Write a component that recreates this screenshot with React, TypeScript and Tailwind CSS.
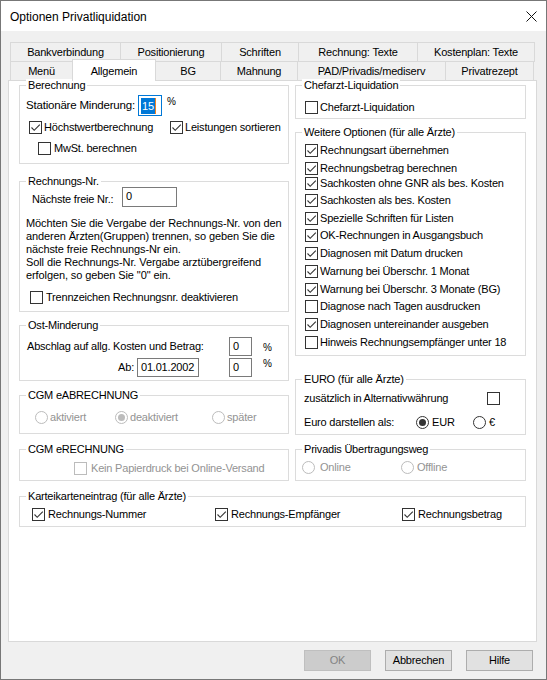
import React from "react";

type CheckProps = {
  label?: string;
  checked?: boolean;
  disabled?: boolean;
  className?: string;
  textClass?: string;
};

function Check({ label, checked = false, disabled = false, className = "", textClass = "ml-[2px]" }: CheckProps) {
  return (
    <div className={`flex items-center h-[13px] ${className}`}>
      <span
        className={`w-[13px] h-[13px] shrink-0 border bg-white flex items-center justify-center ${
          disabled ? "border-[#bcbcbc]" : "border-[#333333]"
        }`}
      >
        {checked && (
          <svg width="11" height="11" viewBox="0 0 11 11">
            <path d="M1.5 5.5 L4.2 8.3 L9.8 2.6" fill="none" stroke="#333333" strokeWidth="1.1" />
          </svg>
        )}
      </span>
      {label && (
        <span className={`whitespace-nowrap leading-[13px] ${textClass} ${disabled ? "text-[#939393]" : ""}`}>{label}</span>
      )}
    </div>
  );
}

function Radio({ label, checked = false, disabled = false, className = "", textClass = "ml-[2px]" }: CheckProps) {
  return (
    <div className={`flex items-center h-[13px] ${className}`}>
      <span
        className={`w-[13px] h-[13px] shrink-0 rounded-full border bg-white flex items-center justify-center ${
          disabled ? "border-[#bcbcbc]" : "border-[#333333]"
        }`}
      >
        {checked && (
          <span className={`w-[7px] h-[7px] rounded-full ${disabled ? "bg-[#bcbcbc]" : "bg-[#333333]"}`} />
        )}
      </span>
      {label && (
        <span className={`whitespace-nowrap leading-[13px] ${textClass} ${disabled ? "text-[#939393]" : ""}`}>{label}</span>
      )}
    </div>
  );
}

function Group({ title, className, children }: { title: string; className: string; children?: React.ReactNode }) {
  return (
    <div className={`relative shrink-0 border border-[#dcdcdc] ${className}`}>
      <span className="absolute left-[6px] -top-[7px] bg-white px-[2px] leading-[13px] whitespace-nowrap">{title}</span>
      {children}
    </div>
  );
}

function Field({ value, className }: { value: string; className: string }) {
  return (
    <div className={`shrink-0 border border-[#7a7a7a] bg-white flex items-center pl-[3px] leading-[13px] ${className}`}>
      {value}
    </div>
  );
}

const row1 = [
  { label: "Bankverbindung", w: "w-[111px]" },
  { label: "Positionierung", w: "w-[101px]" },
  { label: "Schriften", w: "w-[77px]" },
  { label: "Rechnung: Texte", w: "w-[119px]" },
  { label: "Kostenplan: Texte", w: "w-[117px]" },
];

const row2 = [
  { label: "Menü", w: "w-[63px]" },
  { label: "Allgemein", w: "w-[84px]", active: true },
  { label: "BG", w: "w-[65px]" },
  { label: "Mahnung", w: "w-[77px]" },
  { label: "PAD/Privadis/mediserv", w: "w-[148px]" },
  { label: "Privatrezept", w: "w-[88px]" },
];

const options = [
  { label: "Rechnungsart übernehmen", checked: true, mt: "mt-[11px]" },
  { label: "Rechnungsbetrag berechnen", checked: true, mt: "mt-[5px]" },
  { label: "Sachkosten ohne GNR als bes. Kosten", checked: true, mt: "mt-[2px]" },
  { label: "Sachkosten als bes. Kosten", checked: true, mt: "mt-[4px]" },
  { label: "Spezielle Schriften für Listen", checked: true, mt: "mt-[5px]" },
  { label: "OK-Rechnungen in Ausgangsbuch", checked: true, mt: "mt-[4px]" },
  { label: "Diagnosen mit Datum drucken", checked: true, mt: "mt-[5px]" },
  { label: "Warnung bei Überschr. 1 Monat", checked: true, mt: "mt-[5px]" },
  { label: "Warnung bei Überschr. 3 Monate (BG)", checked: true, mt: "mt-[5px]" },
  { label: "Diagnose nach Tagen ausdrucken", checked: false, mt: "mt-[4px]" },
  { label: "Diagnosen untereinander ausgeben", checked: true, mt: "mt-[5px]" },
  { label: "Hinweis Rechnungsempfänger unter 18", checked: false, mt: "mt-[5px]" },
];

export default function App() {
  return (
    <div className="w-[547px] h-[680px] border border-[#777777] bg-[#f0f0f0] text-[11px] tracking-[-0.2px] text-black font-['Liberation_Sans',Arial,sans-serif] overflow-hidden">
      {/* title bar */}
      <div className="h-[30px] bg-white flex items-center justify-between pl-[9px] pr-[9px]">
        <span className="text-[12px] leading-[14px] tracking-normal mt-[2px]">Optionen Privatliquidation</span>
        <svg width="11" height="11" viewBox="0 0 11 11" className="mt-[1px]">
          <path d="M0.5 0.5 L10.5 10.5 M10.5 0.5 L0.5 10.5" stroke="#111111" strokeWidth="1" />
        </svg>
      </div>

      <div className="pl-[7px]">
        {/* tabs */}
        <div className="mt-[11px] ml-[2px]">
          <div className="flex h-[19px]">
            {row1.map((t, i) => (
              <div
                key={t.label}
                className={`${t.w} h-full flex items-center justify-center border-t border-r border-[#d9d9d9] bg-[#f0f0f0] whitespace-nowrap ${
                  i === 0 ? "border-l" : ""
                }`}
              >
                {t.label}
              </div>
            ))}
          </div>
          <div className="flex h-[19px] border-t border-[#d9d9d9] w-[525px]">
            {row2.map((t, i) =>
              t.active ? (
                <div
                  key={t.label}
                  className={`${t.w} relative z-10 self-start h-[22px] -mt-[3px] flex items-start justify-center pt-[3px] bg-white border-t border-r border-l border-[#d9d9d9] -ml-px whitespace-nowrap`}
                >
                  {t.label}
                </div>
              ) : (
                <div
                  key={t.label}
                  className={`${t.w} h-full flex items-center justify-center pt-[1px] border-r border-[#d9d9d9] bg-[#f0f0f0] whitespace-nowrap ${
                    i === 0 ? "border-l" : ""
                  }`}
                >
                  {t.label}
                </div>
              )
            )}
          </div>
        </div>

        {/* tab page */}
        <div className="w-[529px] h-[562px] border border-[#d9d9d9] bg-white pt-[4px] pl-[10px]">
          <div className="flex gap-[6px]">
            {/* left column */}
            <div className="flex flex-col">
              <Group title="Berechnung" className="w-[270px] h-[79px]">
                <div className="flex items-center mt-[9px] pl-[6px] h-[21px]">
                  <span className="w-[112px] whitespace-nowrap text-[11.5px] mt-[1px]">Stationäre Minderung:</span>
                  <div className="w-[24px] h-[21px] border border-[#0078d7] bg-white flex items-center pl-[2px]">
                    <span className="bg-[#0078d7] text-white leading-[16px] h-[16px] px-[1px]">15</span>
                    <span className="w-[1px] h-[16px] bg-[#f58220]" />
                  </div>
                  <span className="self-start text-[10px] leading-[10px] ml-[5px] mt-[2px]">%</span>
                </div>
                <div className="flex mt-[5px] pl-[9px]">
                  <Check label="Höchstwertberechnung" checked className="w-[141px]" />
                  <Check label="Leistungen sortieren" checked />
                </div>
                <Check label="MwSt. berechnen" className="mt-[8px] ml-[18px]" textClass="ml-[3px]" />
              </Group>

              <Group title="Rechnungs-Nr." className="w-[270px] h-[131px] mt-[17px]">
                <div className="flex items-center mt-[5px] pl-[12px]">
                  <span className="w-[90px] whitespace-nowrap mt-[4px]">Nächste freie Nr.:</span>
                  <Field value="0" className="w-[55px] h-[20px] items-start pt-[2px]" />
                </div>
                <p className="mt-[9px] pl-[6px] leading-[13px] whitespace-nowrap tracking-[-0.1px]">
                  Möchten Sie die Vergabe der Rechnungs-Nr. von den
                  <br />
                  anderen Ärzten(Gruppen) trennen, so geben Sie die
                  <br />
                  nächste freie Rechnungs-Nr ein.
                  <br />
                  Soll die Rechnungs-Nr. Vergabe arztübergreifend
                  <br />
                  erfolgen, so geben Sie "0" ein.
                </p>
                <Check label="Trennzeichen Rechnungsnr. deaktivieren" className="mt-[9px] ml-[10px]" textClass="ml-[3px]" />
              </Group>

              <Group title="Ost-Minderung" className="w-[270px] h-[56px] mt-[13px]">
                <div className="flex items-center mt-[11px] pl-[7px] h-[19px]">
                  <span className="w-[202px] whitespace-nowrap">Abschlag auf allg. Kosten und Betrag:</span>
                  <Field value="0" className="w-[23px] h-[19px]" />
                  <span className="text-[10px] leading-[10px] ml-[11px] mt-[3px]">%</span>
                </div>
                <div className="flex items-center mt-[2px] pl-[7px] h-[19px]">
                  <span className="w-[110px] text-right pr-[3px] whitespace-nowrap">Ab:</span>
                  <Field value="01.01.2002" className="w-[62px] h-[19px]" />
                  <Field value="0" className="w-[23px] h-[19px] ml-[30px]" />
                  <span className="self-start text-[10px] leading-[10px] ml-[11px] mt-[1px]">%</span>
                </div>
              </Group>

              <Group title="CGM eABRECHNUNG" className="w-[270px] h-[39px] mt-[14px]">
                <div className="flex mt-[15px] pl-[15px]">
                  <Radio label="aktiviert" disabled className="w-[80px]" />
                  <Radio label="deaktiviert" disabled checked className="w-[97px]" />
                  <Radio label="später" disabled />
                </div>
              </Group>

              <Group title="CGM eRECHNUNG" className="w-[270px] h-[32px] mt-[15px]">
                <Check label="Kein Papierdruck bei Online-Versand" disabled className="mt-[12px] ml-[54px]" textClass="ml-[4px]" />
              </Group>
            </div>

            {/* right column */}
            <div className="flex flex-col">
              <Group title="Chefarzt-Liquidation" className="w-[231px] h-[34px]">
                <Check label="Chefarzt-Liquidation" className="mt-[15px] ml-[9px]" />
              </Group>

              <Group title="Weitere Optionen (für alle Ärzte)" className="w-[231px] h-[224px] mt-[13px]">
                {options.map((o) => (
                  <Check key={o.label} label={o.label} checked={o.checked} className={`${o.mt} ml-[9px]`} />
                ))}
              </Group>

              <Group title="EURO (für alle Ärzte)" className="w-[231px] h-[56px] mt-[23px]">
                <div className="flex items-center mt-[12px] pl-[8px]">
                  <span className="w-[183px] whitespace-nowrap leading-[13px]">zusätzlich in Alternativwährung</span>
                  <Check />
                </div>
                <div className="flex items-center mt-[11px] pl-[8px]">
                  <span className="w-[112px] whitespace-nowrap leading-[13px]">Euro darstellen als:</span>
                  <Radio label="EUR" checked className="w-[57px]" textClass="ml-[3px]" />
                  <Radio label="€" textClass="ml-[3px]" />
                </div>
              </Group>

              <Group title="Privadis Übertragungsweg" className="w-[231px] h-[32px] mt-[14px]">
                <div className="flex mt-[11px] pl-[6px]">
                  <Radio label="Online" disabled className="w-[99px]" textClass="ml-[5px]" />
                  <Radio label="Offline" disabled textClass="ml-[3px]" />
                </div>
              </Group>
            </div>
          </div>

          <Group title="Karteikarteneintrag (für alle Ärzte)" className="w-[507px] h-[31px] mt-[15px]">
            <div className="flex mt-[11px] pl-[12px]">
              <Check label="Rechnungs-Nummer" checked className="w-[183px]" textClass="ml-[3px]" />
              <Check label="Rechnungs-Empfänger" checked className="w-[187px]" textClass="ml-[3px]" />
              <Check label="Rechnungsbetrag" checked textClass="ml-[3px]" />
            </div>
          </Group>
        </div>

        {/* buttons */}
        <div className="flex justify-end gap-[14px] pr-[13px] mt-[8px]">
          <div className="w-[67px] h-[21px] flex items-center justify-center bg-[#cccccc] border border-[#bfbfbf] text-[#838383]">OK</div>
          <div className="w-[67px] h-[21px] flex items-center justify-center bg-[#e1e1e1] border border-[#adadad]">Abbrechen</div>
          <div className="w-[67px] h-[21px] flex items-center justify-center bg-[#e1e1e1] border border-[#adadad]">Hilfe</div>
        </div>
      </div>
    </div>
  );
}
